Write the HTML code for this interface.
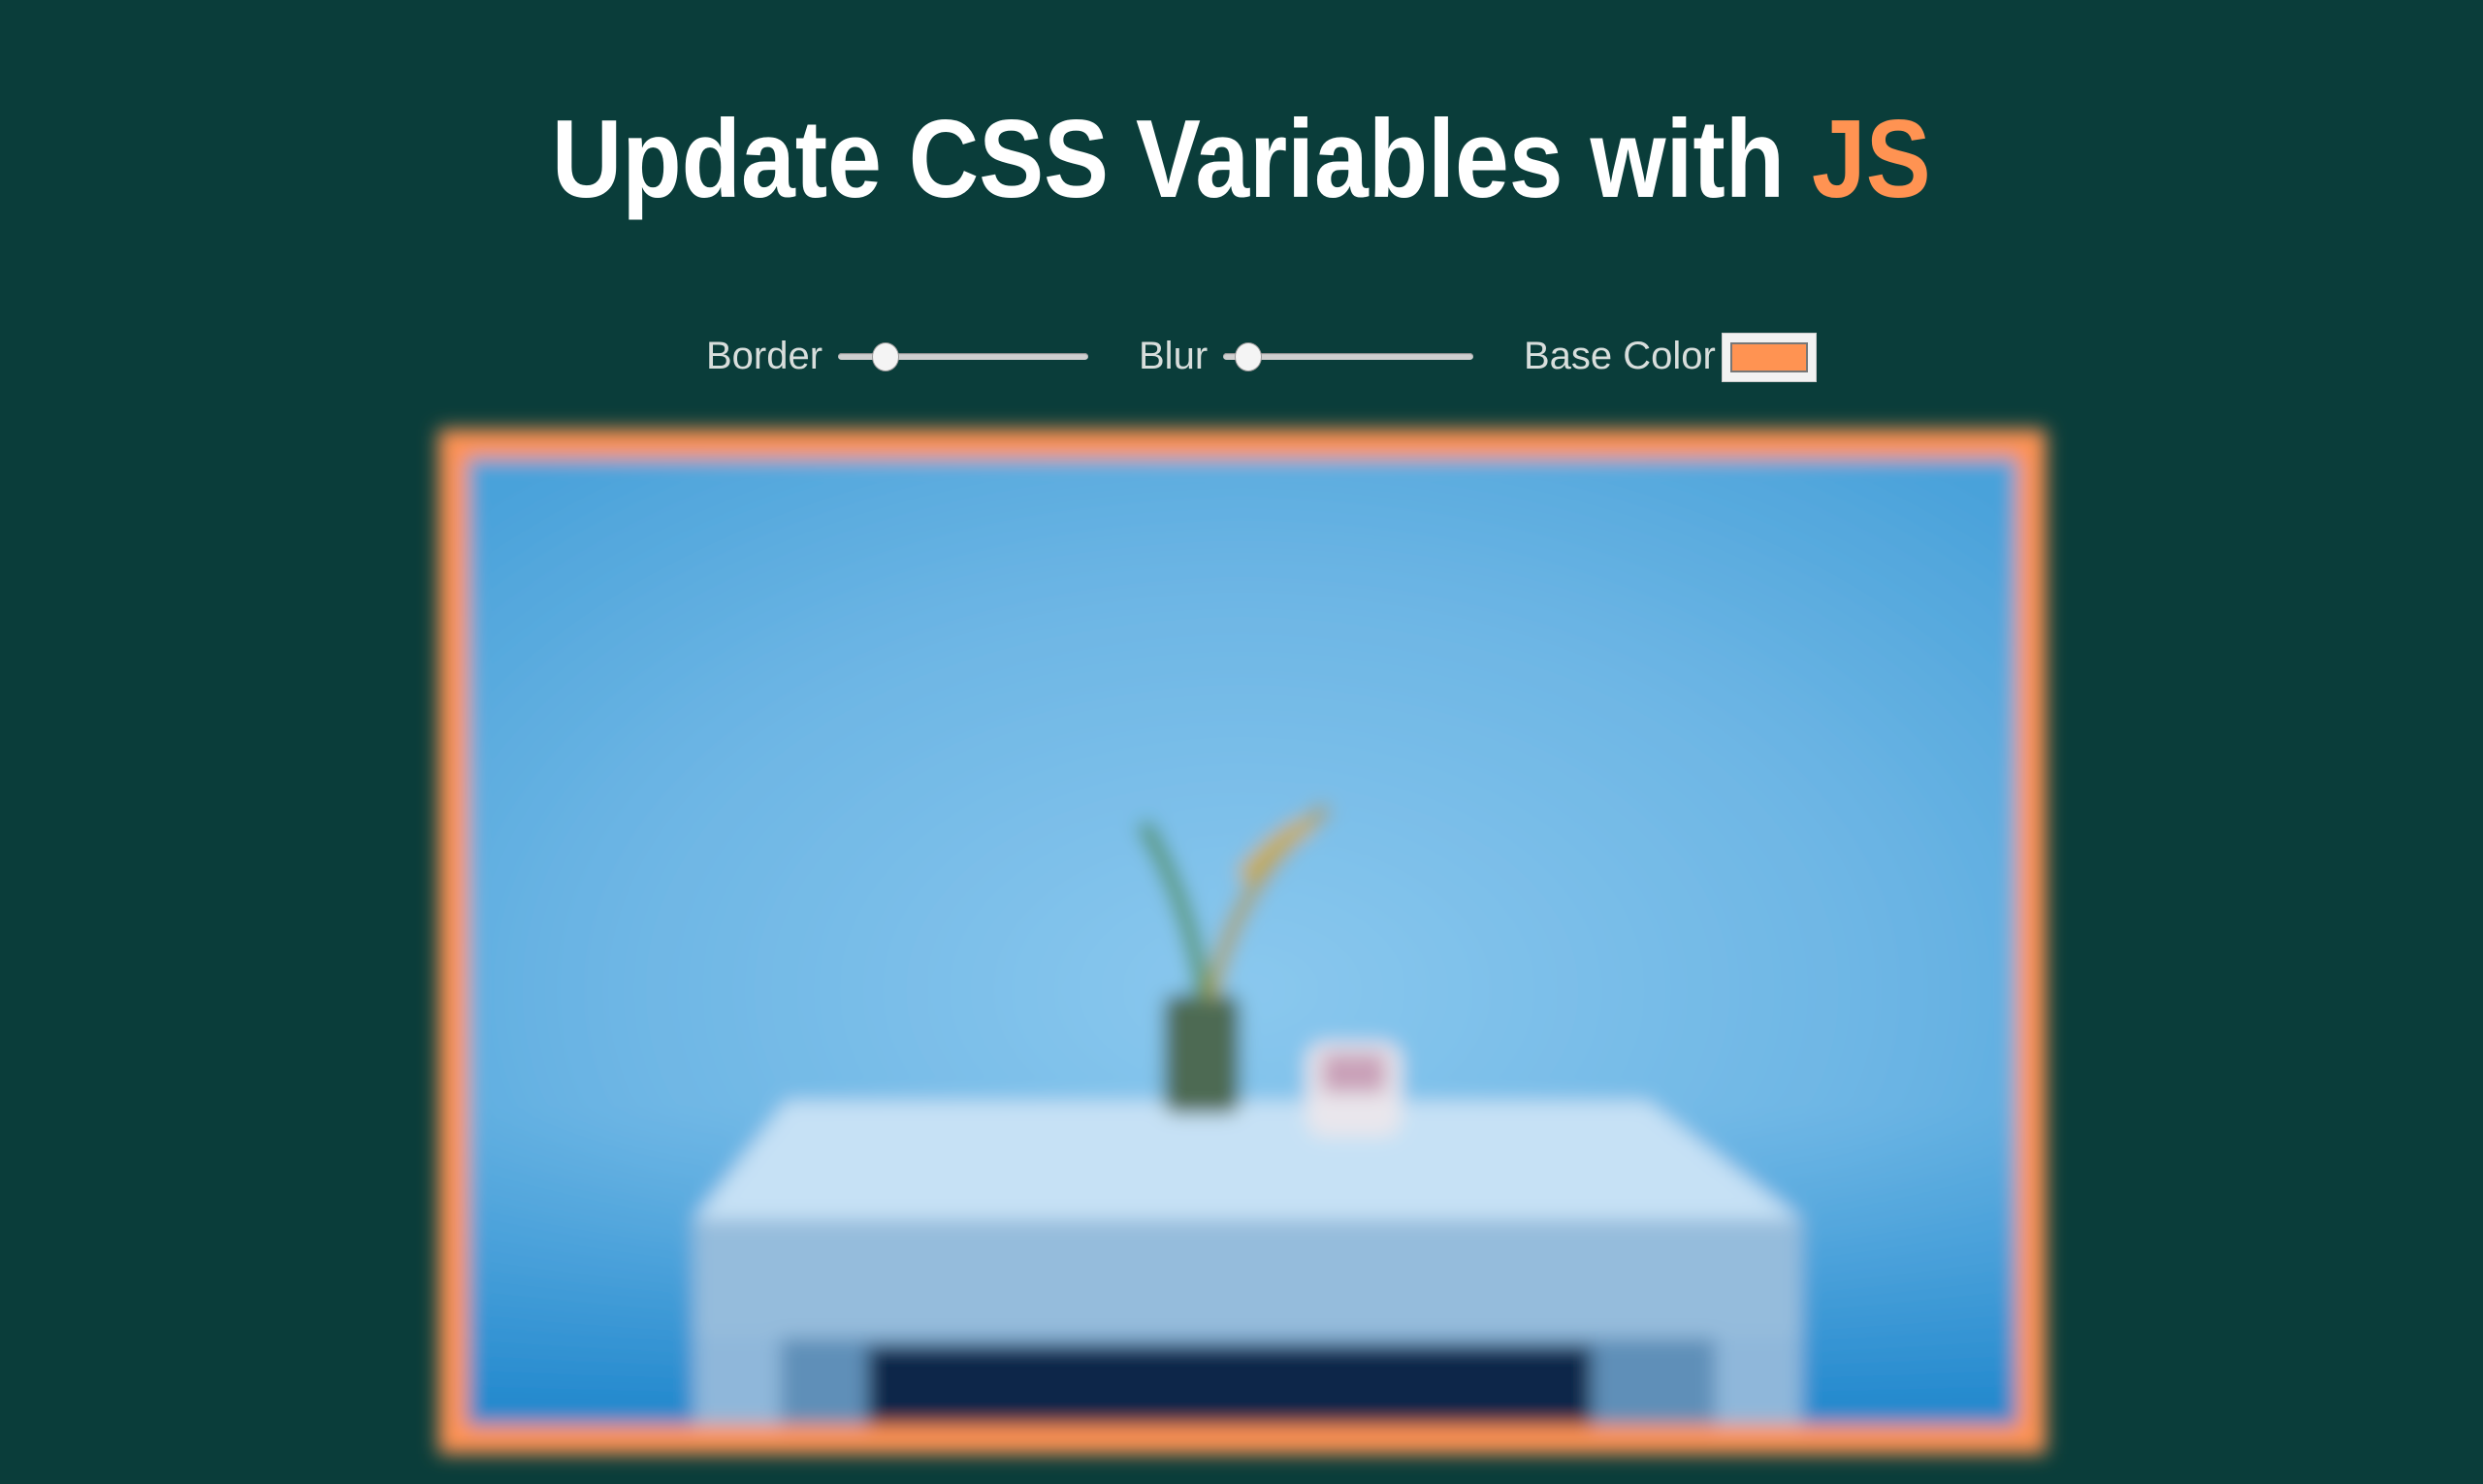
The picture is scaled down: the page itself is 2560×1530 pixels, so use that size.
<!DOCTYPE html>
<html><head><meta charset="utf-8"><style>
html,body{margin:0;padding:0;width:2560px;height:1530px;background:#0a3d3a;overflow:hidden;font-family:"Liberation Sans",sans-serif}
.title{position:absolute;top:100px;left:0;width:2560px;text-align:center}
.title span.t{display:inline-block;font-weight:bold;font-size:114px;color:#fff;transform:scaleX(0.88);transform-origin:center;white-space:nowrap;line-height:130px}
.js{color:#ff9352}
.lbl{position:absolute;color:#d8dedc;font-size:40px;top:343px;line-height:48px}
.track{position:absolute;height:7px;background:#cfcfcf;border-radius:4px;top:364px;box-shadow:inset 0 1px 1px #888}
.thumb{position:absolute;width:26px;height:28px;border-radius:50%;background:#f4f4f4;border:1px solid #999;top:353px}
.sw{position:absolute;left:1775px;top:343px;width:98px;height:51px;background:#f2f2f2;border:1px solid #ccc;box-sizing:border-box}
.sw div{position:absolute;left:8px;top:9px;right:8px;bottom:9px;background:#ff9352;border:2px solid #777}
svg{position:absolute;left:0;top:0}
</style></head><body>
<div class="title"><span class="t">Update CSS Variables with <span class="js">JS</span></span></div>
<div class="lbl" style="left:728px">Border</div>
<div class="track" style="left:864px;width:258px"></div>
<div class="thumb" style="left:899px"></div>
<div class="lbl" style="left:1174px">Blur</div>
<div class="track" style="left:1261px;width:258px"></div>
<div class="thumb" style="left:1273px"></div>
<div class="lbl" style="left:1571px">Base Color</div>
<div class="sw"><div></div></div>
<svg width="2560" height="1530" viewBox="0 0 1568 937">
<defs>
<filter id="b" x="-10%" y="-10%" width="120%" height="120%"><feGaussianBlur stdDeviation="6"/></filter>
<radialGradient id="wall" cx="0.5" cy="0.55" r="0.7">
<stop offset="0" stop-color="#8ac8ee"/><stop offset="0.6" stop-color="#6cb5e4"/><stop offset="1" stop-color="#4aa2da"/>
</radialGradient>
<linearGradient id="low" x1="0" y1="0" x2="0" y2="1">
<stop offset="0" stop-color="#3d9ad8" stop-opacity="0"/><stop offset="1" stop-color="#1f86cc"/>
</linearGradient>
</defs>
<g filter="url(#b)">
<rect x="277" y="271" width="1015" height="647" fill="#ff9352"/>
<rect x="295" y="289" width="979" height="611" fill="url(#wall)"/>
<rect x="295" y="700" width="979" height="200" fill="url(#low)"/>
<polygon points="497,695 1040,695 1138,770 438,770" fill="#c6e1f5"/>
<rect x="438" y="770" width="700" height="75" fill="#95bcdc"/>
<rect x="438" y="845" width="55" height="55" fill="#8fb7da"/>
<rect x="1083" y="845" width="55" height="55" fill="#8fb7da"/>
<rect x="493" y="845" width="590" height="55" fill="#5f8fb8"/>
<rect x="548" y="850" width="457" height="50" fill="#07284a"/>
<rect x="735" y="628" width="48" height="75" rx="8" fill="#4e6a52"/>
<path d="M760,630 C755,590 740,550 722,520" stroke="#4f8f4a" stroke-width="9" fill="none"/>
<path d="M765,630 C775,580 800,540 838,510" stroke="#a9a15a" stroke-width="9" fill="none"/>
<path d="M785,555 C800,535 815,525 828,520" stroke="#c7ad5c" stroke-width="12" fill="none"/>
<rect x="825" y="658" width="60" height="60" rx="12" fill="#e9e6ec"/>
<rect x="835" y="665" width="40" height="25" fill="#c9a0b8"/>
</g>
</svg>
</body></html>
